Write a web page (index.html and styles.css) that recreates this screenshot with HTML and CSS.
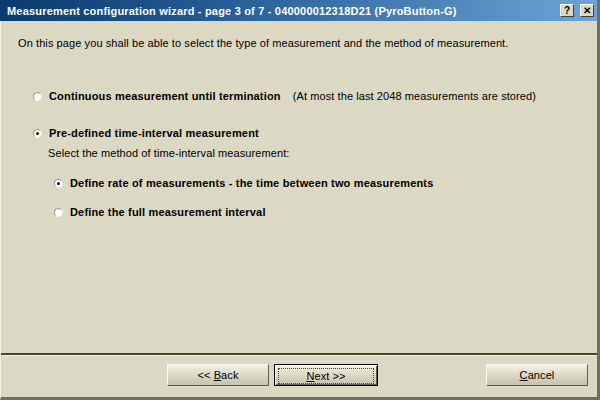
FILE: index.html
```html
<!DOCTYPE html>
<html lang="en">
<head>
    <meta charset="UTF-8">
    <title>Measurement configuration wizard</title>
    <link rel="stylesheet" href="styles.css">
</head>
<body>
    <div class="window">
        <div class="titlebar">
            <span class="title">Measurement configuration wizard - page 3 of 7 - 040000012318D21 (PyroButton-G)</span>
            <span class="tbtn">?</span>
            <span class="tbtn close">&#x2715;</span>
        </div>

        <div class="content">
            <p class="intro">On this page you shall be able to select the type of measurement and the method of measurement.</p>

            <div class="option opt-first">
                <span class="radio"></span>
                <span class="label">Continuous measurement until termination</span>
                <span class="note">(At most the last 2048 measurements are stored)</span>
            </div>

            <div class="option opt-second">
                <span class="radio checked"></span>
                <span class="label">Pre-defined time-interval measurement</span>
            </div>
            <p class="hint">Select the method of time-interval measurement:</p>

            <div class="option sub sub-first">
                <span class="radio checked"></span>
                <span class="label">Define rate of measurements - the time between two measurements</span>
            </div>
            <div class="option sub">
                <span class="radio"></span>
                <span class="label">Define the full measurement interval</span>
            </div>
        </div>

        <div class="footer">
            <div class="buttons">
                <button class="btn">&lt;&lt; <u>B</u>ack</button>
                <button class="btn default"><span class="focus"><u>N</u>ext &gt;&gt;</span></button>
                <span class="spacer"></span>
                <button class="btn last"><u>C</u>ancel</button>
            </div>
        </div>
    </div>
</body>
</html>
```

FILE: styles.css
```css
html, body {
    margin: 0;
    padding: 0;
}
body {
    width: 600px;
    height: 400px;
    font-family: "Liberation Sans", Arial, sans-serif;
    font-size: 11px;
    letter-spacing: 0.09px;
    color: #000;
    background: #dbd8c4;
}
.window {
    box-sizing: border-box;
    width: 600px;
    height: 400px;
    display: flex;
    flex-direction: column;
    background: #dbd8c4;
    border-left: 1px solid #f4f2e6;
    border-right: 3px solid #6e6e66;
    border-bottom: 3px solid #6e6e66;
}
.titlebar {
    height: 21px;
    display: flex;
    align-items: center;
    padding: 0 3px 0 7px;
    margin-left: -1px;
    background: linear-gradient(to right, #0a3a70 0%, #245a92 35%, #6aa4d8 100%);
    color: #fff;
}
.title {
    flex: 1;
    font-weight: bold;
    font-size: 11px;
    letter-spacing: 0.19px;
    white-space: nowrap;
}
.tbtn {
    width: 14px;
    height: 13px;
    margin-left: 6px;
    box-sizing: border-box;
    background: #dbd8c4;
    border: 1px solid;
    border-color: #fff #404040 #404040 #fff;
    color: #000;
    font-weight: bold;
    font-size: 10px;
    line-height: 11px;
    letter-spacing: 0;
    text-align: center;
}
.content {
    flex: 1;
    padding: 0 0 0 17px;
}
.intro {
    margin: 16px 0 0;
    line-height: 13px;
}
.option {
    display: flex;
    align-items: center;
    height: 13px;
    line-height: 13px;
}
.opt-first {
    margin-top: 40px;
    padding-left: 15px;
}
.opt-second {
    margin-top: 24px;
    padding-left: 15px;
}
.label {
    font-weight: bold;
    letter-spacing: 0.17px;
    margin-left: 7px;
}
.note {
    margin-left: 12px;
}
.hint {
    margin: 7px 0 0 30px;
    line-height: 13px;
}
.sub {
    padding-left: 36px;
    margin-top: 16px;
}
.sub.sub-first {
    margin-top: 17px;
}
.radio {
    width: 9px;
    height: 9px;
    flex: none;
    box-sizing: border-box;
    border-radius: 50%;
    border: 1px solid;
    border-color: #9a988c #e8e6dc #f6f5ee #9a988c;
    background: #fff;
    position: relative;
}
.radio.checked::after {
    content: "";
    position: absolute;
    left: 2px;
    top: 2px;
    width: 3px;
    height: 3px;
    border-radius: 50%;
    background: #000;
}
.footer {
    height: 42px;
    border-top: 2px solid #48462c;
    box-shadow: inset 0 1px 0 #f4f2e6;
}
.buttons {
    display: flex;
    padding: 9px 9px 0 166px;
}
.btn {
    width: 102px;
    height: 22px;
    box-sizing: border-box;
    margin-right: 5px;
    padding: 0;
    font-family: "Liberation Sans", Arial, sans-serif;
    font-size: 11px;
    letter-spacing: 0.09px;
    color: #000;
    background: linear-gradient(to bottom, #f2f0e6 0%, #dcd9c6 50%, #c4c1ac 100%);
    border: 1px solid;
    border-color: #fbfaf4 #5e5c50 #5e5c50 #fbfaf4;
}
.btn.last {
    margin-right: 0;
}
.btn.default {
    width: 104px;
    border: 1px solid #000;
    box-shadow: inset 1px 1px 0 #fbfaf4, inset -1px -1px 0 #5e5c50;
    padding: 3px;
}
.focus {
    display: block;
    height: 14px;
    line-height: 14px;
    border: 1px dotted #444;
}
.spacer {
    flex: 1;
}
```
